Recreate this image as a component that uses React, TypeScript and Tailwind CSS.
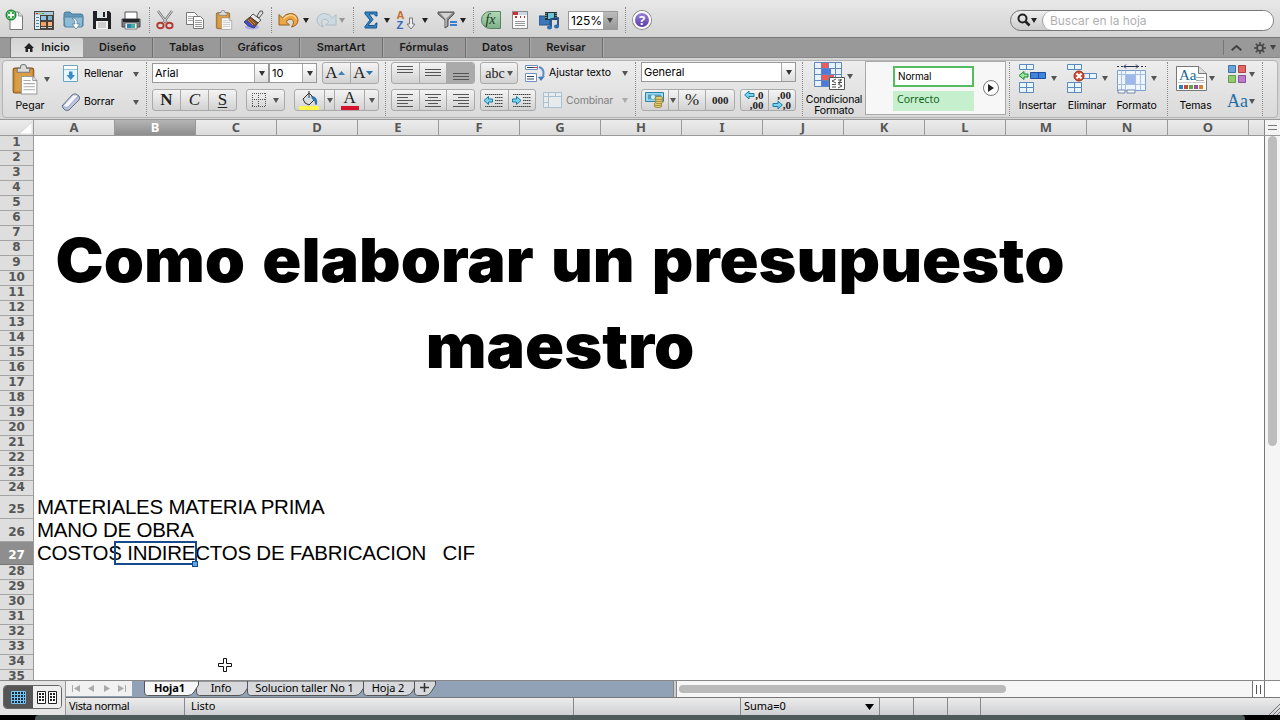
import type { ReactNode } from "react";

const ui = "font-['Inter','Liberation_Sans',sans-serif]";
const lucida = "font-['Noto_Sans','DejaVu_Sans',sans-serif]";
const serif = "font-['Liberation_Serif',serif]";

const columns = ["A", "B", "C", "D", "E", "F", "G", "H", "I", "J", "K", "L", "M", "N", "O"];
const rows = Array.from({ length: 35 }, (_, i) => i + 1);

const ribbonTabs = [
  { label: "Diseño", width: "w-[70px]" },
  { label: "Tablas", width: "w-[68px]" },
  { label: "Gráficos", width: "w-[79px]" },
  { label: "SmartArt", width: "w-[83px]" },
  { label: "Fórmulas", width: "w-[83px]" },
  { label: "Datos", width: "w-[64px]" },
  { label: "Revisar", width: "w-[73px]" },
];

const Caret = ({ className = "" }: { className?: string }) => (
  <svg viewBox="0 0 6 5" className={`h-[5px] w-[6px] shrink-0 ${className}`} fill="currentColor">
    <path d="M0 0h6L3 5z" />
  </svg>
);

const Slot = ({ className, children }: { className: string; children?: ReactNode }) => (
  <div className={`flex h-full shrink-0 items-center justify-center ${className}`}>{children}</div>
);

const Dots = ({ className }: { className: string }) => (
  <div className={`w-0 shrink-0 border-l border-dotted border-[#8a8a8a] ${className}`} />
);

/* ---------- Standard toolbar icons ---------- */

const NewIcon = () => (
  <svg width="20" height="22" viewBox="0 0 20 22">
    <path d="M5 3h8.500l4 4v13.500H5z" fill="#fafafa" stroke="#777" />
    <path d="M13.500 3v4h4" fill="#ddd" stroke="#888" strokeWidth=".8" />
    <circle cx="6" cy="6" r="4.800" fill="#fff" stroke="#1f8a35" strokeWidth="1.500" />
    <circle cx="6" cy="6" r="3.800" fill="#36a847" />
    <path d="M6 3v6M3 6h6" stroke="#fff" strokeWidth="1.800" />
  </svg>
);

const GalleryIcon = () => (
  <svg width="20" height="19" viewBox="0 0 20 19">
    <rect x=".5" y=".5" width="19" height="18" fill="#4a4038" stroke="#4b4b4b" />
    <path d="M1 1h18v3H1z" fill="#a9cbd6" />
    <path d="M2 2h2v1H2z" fill="#d22" />
    <path d="M5 2h2v1H5z" fill="#ea3" />
    <path d="M8 2h2v1H8z" fill="#4a4" />
    <path d="M1 4h5v14H1z" fill="#dcedf5" />
    <path d="M2 6.500h3M2 9.500h3M2 12.500h3M2 15.500h3" stroke="#58a" />
    <path d="M7 5h5v4H7z" fill="#8cc6e6" />
    <path d="M14 5h4v4h-4z" fill="#79b5d4" />
    <path d="M7 11h5v4H7z" fill="#f3a164" />
    <path d="M14 11h4v4h-4z" fill="#f6b07c" />
    <path d="M7 16.500h5M14 16.500h4" stroke="#cfd8da" />
  </svg>
);

const OpenIcon = () => (
  <svg width="21" height="19" viewBox="0 0 21 19">
    <path d="M1 3q0-2 2-2h4l2 2h9q2 0 2 2v10H1z" fill="#5f98bb" stroke="#4a7d9c" />
    <path d="M1 6h19l-1 10H2z" fill="#8fbdd6" stroke="#5287a7" />
    <path d="M9 7q6 0 5 6h3l-4 5-4-5h3q0-4-3-6z" fill="#fff" stroke="#55798e" strokeWidth=".7" />
  </svg>
);

const SaveIcon = () => (
  <svg width="18" height="18" viewBox="0 0 18 18">
    <path d="M0 0h16l2 2v16H0z" fill="#202124" />
    <path d="M4 0h10v7H4z" fill="#dce3e5" />
    <path d="M10 1h2v5h-2z" fill="#222" />
    <path d="M3 10h12v8H3z" fill="#f1f1f1" />
    <path d="M5 12h8M5 14h8M5 16h8" stroke="#aaa" />
  </svg>
);

const PrintIcon = () => (
  <svg width="20" height="19" viewBox="0 0 20 19">
    <path d="M4 1h12v8H4z" fill="#fff" stroke="#555" />
    <path d="M1 8h18v8H1z" fill="#7b7f84" stroke="#444" />
    <path d="M2 8h16v3H2z" fill="#232528" />
    <path d="M4 12h12v6H4z" fill="#eef3f7" stroke="#555" strokeWidth=".7" />
    <path d="M6 13h4v4H6z" fill="#2782b5" />
    <path d="M10 13h4v4h-4z" fill="#47b38f" />
  </svg>
);

const CutIcon = () => (
  <svg width="18" height="20" viewBox="0 0 18 20" fill="none">
    <path d="M2 1l9 12M16 1L7 13" stroke="#777" strokeWidth="2.4" />
    <path d="M2 1l9 12M16 1L7 13" stroke="#d9dddf" strokeWidth="1" />
    <ellipse cx="4.4" cy="15.5" rx="3.2" ry="2.8" stroke="#b23c33" strokeWidth="1.9" />
    <ellipse cx="13.4" cy="15.5" rx="3.2" ry="2.8" stroke="#b23c33" strokeWidth="1.9" />
  </svg>
);

const CopyIcon = () => (
  <svg width="20" height="19" viewBox="0 0 20 19" stroke="#777">
    <path d="M1.500 1.500h8l3 3v9h-11z" fill="#fafafa" />
    <path d="M3 5.500h7M3 7.500h7M3 9.500h7" stroke="#aaa" />
    <path d="M8.500 5.500h7l3 3v9h-10z" fill="#fff" />
    <path d="M10 9.500h7M10 11.500h7M10 13.500h7M10 15.500h7" stroke="#999" />
  </svg>
);

const ClipboardIcon = ({ className }: { className: string }) => (
  <svg className={className} viewBox="0 0 25 30">
    <rect x="1" y="4" width="20" height="24" rx="2" fill="#c98b35" stroke="#8d5919" />
    <path d="M3 6h16v20H3z" fill="#d99e47" />
    <path d="M5 4h3q0-3.500 3-3.500t3 3.500h3v4H5z" fill="#dcdcdc" stroke="#777" />
    <path d="M9 12h11l4 4v13H9z" fill="#fff" stroke="#999" />
    <path d="M20 12v4h4" fill="#ddd" stroke="#888" strokeWidth=".8" />
    <path d="M11 16h7M11 19h11M11 22h11M11 25h11" stroke="#aaa" />
  </svg>
);

const BrushIcon = () => (
  <svg width="21" height="20" viewBox="0 0 21 20">
    <ellipse cx="9" cy="17" rx="7" ry="2.500" fill="#a7adee" />
    <path d="M14 6l3-5q3-1 3 2l-4 5z" fill="#ddd" stroke="#555" />
    <path d="M10 4l8 6-3 3-8-6z" fill="#e8e8e8" stroke="#555" />
    <path d="M7 7l8 6-4 5q-6-1-10-6z" fill="#855229" stroke="#53351f" />
    <path d="M1 12q4 5 10 6l1-2Q6 14 4 10z" fill="#3e4ec9" />
    <path d="M5 10l5 5M7 9l5 5" stroke="#c98e55" />
  </svg>
);

const UndoIcon = () => (
  <svg width="21" height="17" viewBox="0 0 21 17">
    <path d="M1 2.500V13h10.500l-3.500-3.400Q11 6 13.800 7.300q3.400 2.700-.3 7.700Q20 13.500 20 8 19 1.500 12.500 1.500 7.500 1.500 4.500 6z" fill="#f1a741" stroke="#95601c" />
    <path d="M5.500 7q4.500-5 9.500-3.500 3 1.500 3.500 4" fill="none" stroke="#fbd79c" strokeWidth="1.200" />
  </svg>
);

const RedoIcon = () => (
  <svg width="21" height="17" viewBox="0 0 21 17" className="opacity-60">
    <path d="M20 2.500V13H9.500L13 9.600Q10 6 7.200 7.300 3.800 10 7.500 15 1 13.500 1 8 2 1.500 8.500 1.500q5 0 8 4.500z" fill="#c5d9e4" stroke="#8caabb" />
  </svg>
);

const SumIcon = () => (
  <svg width="14" height="18" viewBox="0 0 14 18">
    <path d="M1 1h12v4h-1.500q-.5-2-2-2H5l4 5.500-5 6h6q1.500 0 2-2.500H13l-.5 5H1v-1.500l5-6.500-5-6z" fill="#3486c5" stroke="#17558f" />
  </svg>
);

const SortIcon = () => (
  <div className="flex h-[20px] w-[21px] items-end font-['Liberation_Sans',sans-serif] text-[11px] font-bold">
    <div className="flex flex-col leading-[10px]">
      <span className="text-[#c66d2d]">A</span>
      <span className="text-[#3868b9]">Z</span>
    </div>
    <svg className="ml-[2px]" width="10" height="13" viewBox="0 0 10 13">
      <path d="M3.500 1h3v6H9l-4 5-4-5h2.500z" fill="#eee" stroke="#777" />
    </svg>
  </div>
);

const FilterIcon = () => (
  <svg width="21" height="18" viewBox="0 0 21 18">
    <path d="M1 1h16v2l-6 6v6l-3 2V9L1 3z" fill="#888" stroke="#555" />
    <path d="M3 2h12l-4 4-1.500 1v8l-1 .5V8z" fill="#d2d2d2" />
    <path d="M13 11h7M13 14h7" stroke="#397ed0" strokeWidth="1.800" />
  </svg>
);

const FormulaIcon = () => (
  <div className={`flex h-[18px] w-[20px] items-center justify-center rounded-l-full rounded-r-[2px] border border-[#568363] bg-gradient-to-b from-[#b2d8b4] to-[#7fb18a] text-[14px] leading-none text-[#173a22] italic ${serif}`}>
    fx
  </div>
);

const ToolboxIcon = () => (
  <svg width="16" height="18" viewBox="0 0 16 18">
    <rect x=".5" y=".5" width="15" height="17" fill="#fafafa" stroke="#8b8b8b" />
    <path d="M1 1h5v3H1z" fill="#c33" />
    <path d="M6 1h9v3H6z" fill="#c9dbe7" />
    <path d="M3 6h2M8 6h1M12 6h1" stroke="#a33" strokeWidth="2" />
    <path d="M3 10.500h10M3 12.500h10M3 14.500h10" stroke="#999" />
  </svg>
);

const MediaIcon = () => (
  <svg width="21" height="19" viewBox="0 0 21 19">
    <path d="M0 5h11v9H0z" fill="#3977b9" stroke="#285382" />
    <path d="M6 1h12v8H6z" fill="#233" />
    <path d="M9 2h6v6H9z" fill="#6bc6d8" />
    <path d="M7 2v6M17 2v6" stroke="#ddd" strokeDasharray="1 1" />
    <path d="M12 16V8l7-1v8" fill="none" stroke="#204f86" strokeWidth="1.800" />
    <ellipse cx="10.500" cy="16.500" rx="2.500" ry="1.900" fill="#2c6dae" />
    <ellipse cx="17.500" cy="15.500" rx="2.500" ry="1.900" fill="#2c6dae" />
  </svg>
);

const StandardToolbar = () => (
  <div className="flex h-[37px] items-center bg-gradient-to-b from-[#e8e8e8] to-[#d3d3d3] pt-[3px] text-[#222]">
    <Slot className="w-[29px]"><NewIcon /></Slot>
    <Slot className="w-[30px]"><GalleryIcon /></Slot>
    <Slot className="w-[28px]"><OpenIcon /></Slot>
    <Slot className="w-[30px]"><SaveIcon /></Slot>
    <Slot className="w-[28px]"><PrintIcon /></Slot>
    <Dots className="ml-[4px] h-[26px]" />
    <Slot className="w-[30px]"><CutIcon /></Slot>
    <Slot className="w-[29px]"><CopyIcon /></Slot>
    <Slot className="w-[30px]"><ClipboardIcon className="h-[20px] w-[18px]" /></Slot>
    <Slot className="w-[29px]"><BrushIcon /></Slot>
    <Dots className="ml-[3px] h-[26px]" />
    <Slot className="w-[32px]"><UndoIcon /></Slot>
    <Caret className="-ml-px" />
    <Slot className="w-[34px]"><RedoIcon /></Slot>
    <Caret className="-ml-[4px] text-[#999]" />
    <Dots className="ml-[8px] h-[26px]" />
    <Slot className="w-[34px]"><SumIcon /></Slot>
    <Caret className="-ml-[4px]" />
    <Slot className="w-[34px]"><SortIcon /></Slot>
    <Caret className="-ml-[2px]" />
    <Slot className="w-[38px]"><FilterIcon /></Slot>
    <Caret className="-ml-[6px]" />
    <Dots className="ml-[7px] h-[26px]" />
    <Slot className="w-[33px]"><FormulaIcon /></Slot>
    <Slot className="w-[26px]"><ToolboxIcon /></Slot>
    <Slot className="w-[32px]"><MediaIcon /></Slot>
    <div className={`ml-[3px] flex h-[19px] w-[50px] border border-[#999] bg-white text-[12px] leading-[18px] text-black ${ui}`}>
      <span className="flex-1 pl-[2px] tracking-[-0.1px]">125%</span>
      <span className="flex w-[14px] items-center justify-center bg-gradient-to-b from-[#bbb] to-[#999] text-[#444]"><Caret /></span>
    </div>
    <Dots className="ml-[7px] h-[26px]" />
    <Slot className="w-[32px]">
      <div className="flex h-[18px] w-[18px] items-center justify-center rounded-full border-2 border-white bg-gradient-to-b from-[#9a80d6] to-[#5b3da8] text-[13px] leading-none font-bold text-white shadow-[0_0_0_1px_#888]">?</div>
    </Slot>
    <div className="mr-[6px] ml-auto flex h-[21px] w-[264px] overflow-hidden rounded-full border border-[#777] bg-gradient-to-b from-[#eee] to-[#ccc]">
      <div className="flex w-[31px] items-center pl-[6px]">
        <svg width="14" height="14" viewBox="0 0 14 14" fill="none" stroke="#222">
          <circle cx="5.500" cy="5.500" r="4" strokeWidth="2" />
          <path d="M8.500 8.500l4 4" strokeWidth="2.600" />
        </svg>
        <Caret />
      </div>
      <div className={`flex-1 rounded-l-full border-l border-[#999] bg-white pl-[7px] text-[12px] leading-[20px] tracking-[-0.05px] text-[#b0b0b0] ${ui}`}>Buscar en la hoja</div>
    </div>
  </div>
);

const RibbonTabs = () => (
  <div className={`flex h-[20px] border-t border-[#777] bg-[#999] text-[11px] leading-[18px] font-semibold text-[#1b1b1b] ${ui}`}>
    <div className="w-[11px] border-r border-[#777]" />
    <div className="flex w-[72px] items-center justify-center gap-[7px] rounded-t-[2px] bg-gradient-to-b from-[#d4d4d4] to-[#e0e0e0] pb-px">
      <svg width="10" height="9" viewBox="0 0 10 9"><path d="M5 0l5 5H8.500v4h-2.500V6H4v3H1.500V5H0z" fill="#222" /></svg>
      Inicio
    </div>
    {ribbonTabs.map((tab) => (
      <div key={tab.label} className={`border-r border-[#6e6e6e] text-center shadow-[1px_0_0_#aaa] ${tab.width}`}>{tab.label}</div>
    ))}
    <div className="my-[2px] mr-[7px] ml-auto border-l border-[#777]" />
    <div className="flex items-center text-[#444]">
      <svg width="11" height="6" viewBox="0 0 11 6" fill="none" stroke="currentColor" strokeWidth="2"><path d="M.7 5.300L5.500 1l4.800 4.300" /></svg>
      <svg className="ml-[12px]" width="12" height="12" viewBox="0 0 12 12" fill="none" stroke="currentColor">
        <circle cx="6" cy="6" r="3" strokeWidth="1.700" />
        <path d="M6 0v3M6 9v3M0 6h3M9 6h3M1.800 1.800l2 2M8.200 8.200l2 2M1.800 10.200l2-2M8.200 3.800l2-2" strokeWidth="1.500" />
      </svg>
      <Caret className="mr-[4px] ml-[4px]" />
    </div>
  </div>
);

/* ---------- Ribbon pieces ---------- */

const ButtonGroup = ({ className, children }: { className: string; children: ReactNode }) => (
  <div className={`flex h-[22px] shrink-0 divide-x divide-[#aaa] overflow-hidden rounded-[3px] border border-[#aaa] bg-gradient-to-b from-[#f4f4f4] to-[#d2d2d2] ${className}`}>{children}</div>
);

const Btn = ({ className = "flex-1", children }: { className?: string; children: ReactNode }) => (
  <div className={`flex items-center justify-center text-[#222] ${className}`}>{children}</div>
);

const Combo = ({ className, children }: { className: string; children: ReactNode }) => (
  <div className={`flex h-[20px] shrink-0 border border-[#999] bg-white text-[11px] leading-[18px] text-black ${ui} ${className}`}>
    <span className="flex-1 pl-[2px]">{children}</span>
    <span className="flex w-[14px] items-center justify-center border-l border-[#aaa] bg-gradient-to-b from-white to-[#ddd] text-[#333]"><Caret /></span>
  </div>
);

const Lines = ({ d }: { d: string }) => (
  <svg width="18" height="16" viewBox="0 0 18 16"><path d={d} stroke="#555" strokeWidth="1" /></svg>
);

const IndentIcon = ({ flip }: { flip?: boolean }) => (
  <svg width="22" height="15" viewBox="0 0 22 15">
    <path d="M2 1.500h18M12 4.500h8M12 7.500h8M12 10.500h8M2 13.500h18" stroke="#444" strokeDasharray="1.500 .5" />
    <path d={flip ? "M10 7.500L5.500 3.500v2.500H1.500v3h4v2.500z" : "M1 7.500l4.500-4v2.500h4v3h-4v2.500z"} fill="#77d4f0" stroke="#1c7aa5" />
  </svg>
);

const ClipboardGroup = () => (
  <div className={`flex w-[143px] text-[10.5px] text-black ${ui}`}>
    <div className="w-[54px] shrink-0 pt-[3px]">
      <div className="flex items-center pl-[9px]">
        <ClipboardIcon className="h-[31px] w-[26px]" />
        <Caret className="ml-[6px] text-[#555]" />
      </div>
      <div className="mt-[4px] text-center leading-[14px]">Pegar</div>
    </div>
    <div className="flex-1">
      <div className="flex h-[26px] items-center pl-[5px]">
        <svg width="18" height="18" viewBox="0 0 18 18">
          <path d="M1.500.5h14v16h-14z" fill="#e9f6fb" stroke="#6ca5bf" />
          <path d="M2 1h13v3H2z" fill="#fff" /><path d="M2 4.500h13" stroke="#8fc0d5" />
          <path d="M7 6.500h3.500V10H13l-4.200 5L4.500 10H7z" fill="#368ccd" />
        </svg>
        <span className="ml-[4px] w-[49px] tracking-[-0.15px]">Rellenar</span><Caret className="text-[#555]" />
      </div>
      <div className="mt-[2px] flex h-[26px] items-center pl-[4px]">
        <svg width="20" height="19" viewBox="0 0 20 19">
          <path d="M1 13L11 2q2-1.500 4-1l3 2q1 2 0 4L8 17q-2 1-4 0l-2-2z" fill="#bac4df" stroke="#677087" />
          <path d="M2 13L12 2q3-1 5 1L7 14q-2 1-5-1z" fill="#f3f5fb" stroke="#8f98ad" strokeWidth=".7" />
        </svg>
        <span className="ml-[3px] w-[49px] tracking-[-0.15px]">Borrar</span><Caret className="text-[#555]" />
      </div>
    </div>
  </div>
);

const FontGroup = () => (
  <div className="flex w-[238px] flex-col gap-[5px] pt-px pl-[5px]">
    <div className="flex h-[22px] items-center">
      <Combo className="w-[117px]">Arial</Combo>
      <Combo className="w-[48px]">10</Combo>
      <ButtonGroup className={`ml-[5px] w-[57px] text-[17px] ${serif}`}>
        <Btn><span className="-ml-[3px]">A</span><svg width="7" height="4"><path d="M0 4l3.500-4L7 4z" fill="#3c83b4" /></svg></Btn>
        <Btn><span className="-ml-[3px]">A</span><svg width="7" height="4"><path d="M0 0h7L3.500 4z" fill="#2a71a8" /></svg></Btn>
      </ButtonGroup>
    </div>
    <div className="flex">
      <ButtonGroup className={`w-[85px] text-[17px] ${serif}`}>
        <Btn><span className="font-semibold">N</span></Btn>
        <Btn><i>C</i></Btn>
        <Btn><span className="underline underline-offset-2">S</span></Btn>
      </ButtonGroup>
      <ButtonGroup className="ml-[9px] w-[39px]">
        <Btn>
          <svg width="14" height="14" viewBox="0 0 14 14" fill="none" stroke="#555" strokeDasharray="1 1"><path d="M.5 0v14M6.500 0v14M13.500 0v14M0 .5h14M0 6.500h14M0 13.500h14" /></svg>
          <Caret className="ml-[7px] text-[#555]" />
        </Btn>
      </ButtonGroup>
      <ButtonGroup className="ml-[9px] w-[85px]">
        <Btn className="w-[31px]">
          <svg width="21" height="19" viewBox="0 0 21 19">
            <path d="M0 15h20v4H0z" fill="#fcf54a" />
            <path d="M4 8l6-6 6 6-6 6q-5-1-6-6z" fill="#d7dde0" stroke="#333" />
            <path d="M10 7V0" stroke="#333" />
            <path d="M12 5q7 0 6 8-1 2-2 0 0-4-3-5z" fill="#2c75ad" />
          </svg>
        </Btn>
        <Btn className="w-[10px]"><Caret className="text-[#555]" /></Btn>
        <Btn className={`w-[31px] flex-col text-[17px] leading-[14px] ${serif}`}>A<span className="mt-px h-[4px] w-[18px] bg-[#d5102a]" /></Btn>
        <Btn className="w-[13px]"><Caret className="text-[#555]" /></Btn>
      </ButtonGroup>
    </div>
  </div>
);

const AlignGroup = () => (
  <div className={`flex w-[249px] flex-col gap-[5px] pt-px pl-[5px] text-[10.5px] ${ui}`}>
    <div className="flex h-[22px] items-center">
      <ButtonGroup className="w-[84px]">
        <Btn><Lines d="M1 1.500h16M1 4.500h16M1 7.500h16" /></Btn>
        <Btn><Lines d="M1 4.500h16M1 7.500h16M1 10.500h16" /></Btn>
        <Btn className="flex-1 bg-[#aaa]"><Lines d="M1 8.500h16M1 11.500h16M1 14.500h16" /></Btn>
      </ButtonGroup>
      <ButtonGroup className={`ml-[5px] w-[38px] text-[14px] ${serif}`}><Btn>abc<Caret className="ml-[2px] text-[#555]" /></Btn></ButtonGroup>
      <svg className="ml-[7px]" width="21" height="19" viewBox="0 0 21 19" fill="none">
        <path d="M.5 1.500h12v4H.5zM.5 9.500h11v8H.5z" fill="#fff" stroke="#6d91c0" />
        <path d="M2 3.500h7M2 12.500h7M2 15h7" stroke="#345" />
        <path d="M9 3.500h3" stroke="#d33" />
        <path d="M14 3q6 2 4 9" stroke="#5f8cc7" strokeWidth="2" /><path d="M13 13l7-1-4 5z" fill="#4479bd" />
      </svg>
      <span className="ml-[3px] w-[73px] tracking-[-0.05px] text-black">Ajustar texto</span>
      <Caret className="text-[#555]" />
    </div>
    <div className="flex items-center">
      <ButtonGroup className="w-[84px]">
        <Btn><Lines d="M1 2.500h16M1 5.500h11M1 8.500h16M1 11.500h11M1 14.500h16" /></Btn>
        <Btn><Lines d="M1 2.500h16M4 5.500h10M1 8.500h16M4 11.500h10M1 14.500h16" /></Btn>
        <Btn><Lines d="M1 2.500h16M6 5.500h11M1 8.500h16M6 11.500h11M1 14.500h16" /></Btn>
      </ButtonGroup>
      <ButtonGroup className="ml-[5px] w-[56px]"><Btn><IndentIcon /></Btn><Btn><IndentIcon flip /></Btn></ButtonGroup>
      <svg className="ml-[7px]" width="19" height="16" viewBox="0 0 19 16"><path d="M.5.5h18v15H.5zM5.500.5v15M.5 4.500h18M12.500.5v4M.5 10.500h5" fill="#e7ebee" stroke="#abc0ce" /></svg>
      <span className="mt-px ml-[4px] w-[56px] tracking-[-0.15px] text-[#808080]">Combinar</span>
      <Caret className="text-[#aaa]" />
    </div>
  </div>
);

const NumberGroup = () => (
  <div className="flex w-[166px] flex-col gap-[5px] pt-px pl-[5px]">
    <div className="flex h-[22px] items-start"><Combo className="w-[155px]">General</Combo></div>
    <div className="flex">
      <ButtonGroup className="w-[94px]">
        <Btn className="w-[27px]">
          <svg width="19" height="16" viewBox="0 0 19 16">
            <path d="M.5.5h18v9H.5z" fill="#9edaf0" stroke="#2f80a6" />
            <path d="M3 2.500h13v5H3z" fill="#579fc1" /><circle cx="8" cy="5" r="2" fill="#dff4f9" />
            <g fill="#e2cd75" stroke="#8c762d" strokeWidth=".7"><ellipse cx="13" cy="14" rx="4" ry="1.600" /><ellipse cx="13" cy="12" rx="4" ry="1.600" /><ellipse cx="14" cy="10" rx="4" ry="1.600" /><ellipse cx="14" cy="8" rx="4" ry="1.600" /><ellipse cx="14" cy="6" rx="4" ry="1.600" /></g>
          </svg>
        </Btn>
        <Btn className="w-[10px]"><Caret className="text-[#555]" /></Btn>
        <Btn className={`w-[28px] text-[17px] ${serif}`}>%</Btn>
        <Btn className={`w-[28px] text-[11px] font-bold ${serif}`}>000</Btn>
      </ButtonGroup>
      <ButtonGroup className={`ml-[5px] w-[56px] text-[11px] leading-[10px] font-bold ${serif}`}>
        <Btn className="flex-1 flex-col">
          <span className="flex items-center self-end pr-[4px]"><svg width="11" height="10"><path d="M.7 5L5 1v2.500h5v3H5V9z" fill="#77d4f0" stroke="#1c7aa5" /></svg>,0</span>
          <span className="self-end pr-[4px]">,00</span>
        </Btn>
        <Btn className="flex-1 flex-col">
          <span className="self-end pr-[4px]">,00</span>
          <span className="flex items-center self-end pr-[4px]"><svg width="11" height="10"><path d="M10.300 5L6 1v2.500H1v3h5V9z" fill="#77d4f0" stroke="#1c7aa5" /></svg>,0</span>
        </Btn>
      </ButtonGroup>
    </div>
  </div>
);

const StylesGroup = () => (
  <div className={`flex w-[206px] text-[10.5px] text-black ${ui}`}>
    <div className="w-[62px] pt-[1px] text-center">
      <div className="flex items-center pl-[11px]">
        <svg width="31" height="29" viewBox="0 0 31 29">
          <path d="M.5.5h27v24H.5z" fill="#e8f2ff" />
          <path d="M8 1h6v6H8z" fill="#ee5a5a" /><path d="M8 7h9v6H8z" fill="#4d78dc" />
          <path d="M8 13h12v6H8z" fill="#ee5a5a" /><path d="M8 19h6v6H8z" fill="#4d78dc" />
          <path d="M.5.5h27v24H.5zM7.500.5v24M14.500.5v24M21.500.5v24M.5 6.500h27M.5 12.500h27M.5 18.500h27" fill="none" stroke="#6287bd" />
          <path d="M15.500 15.500h15v12h-15z" fill="#fff" stroke="#555" />
          <path d="M22 17l-4 2 4 2M18 22.500h4M24 18h4M24 20.500h4M27 17l-2 5M18 25h4M24 22l4 2-4 2" stroke="#222" fill="none" strokeWidth=".8" />
        </svg>
        <Caret className="ml-[2px] text-[#555]" />
      </div>
      <div className="mt-[3px] leading-[11px] tracking-[-0.2px] whitespace-nowrap">Condicional<br />Formato</div>
    </div>
    <div className="flex h-[54px] w-[141px] items-center border border-[#aaa] bg-[#f7f7f7] pl-[27px]">
      <div className="flex w-[81px] flex-col gap-[4px]">
        <div className="h-[21px] border-2 border-[#55bd60] bg-white pl-[3px] text-[10px] leading-[16px] tracking-[-0.15px]">Normal</div>
        <div className={`h-[20px] bg-[#c5efcd] pl-[4px] text-[10.5px] leading-[17px] text-[#126419] ${lucida}`}>Correcto</div>
      </div>
      <div className="ml-[9px] flex h-[16px] w-[16px] items-center justify-center rounded-full border border-[#777] bg-white">
        <svg width="6" height="8"><path d="M0 0l6 4-6 4z" fill="#222" /></svg>
      </div>
    </div>
  </div>
);

const CellTool = ({ label, className, children }: { label: string; className: string; children: ReactNode }) => (
  <div className={`pt-[2px] text-center ${className}`}>
    <div className="flex h-[31px] items-center">{children}<Caret className="ml-auto text-[#555]" /></div>
    <div className="mt-[5px] leading-[14px] tracking-[-0.1px]">{label}</div>
  </div>
);

const SmallCells = ({ x, y }: { x: number; y: number }) => (
  <g transform={`translate(${x} ${y})`}><path d="M.5.5h14v5H.5zM7.500.5v5" fill="#e8f5ff" stroke="#5b89be" /></g>
);

const CellsGroup = () => (
  <div className={`flex w-[157px] pl-[8px] text-[10.5px] text-black ${ui}`}>
    <CellTool label="Insertar" className="w-[39px]">
      <svg width="28" height="30" viewBox="0 0 28 30">
        <SmallCells x={1} y={0} /><SmallCells x={1} y={18} /><SmallCells x={1} y={23} />
        <path d="M12.500 8.500h15v6h-15zM20.500 8.500v6" fill="#4385dc" stroke="#234f9f" />
        <path d="M1 11.500l5-4v2.500h4v3H6v2.500z" fill="#9de6a0" stroke="#208737" />
      </svg>
    </CellTool>
    <CellTool label="Eliminar" className="ml-[9px] w-[42px]">
      <svg width="31" height="30" viewBox="0 0 31 30">
        <SmallCells x={1} y={0} /><SmallCells x={16} y={9} /><SmallCells x={1} y={18} /><SmallCells x={1} y={23} />
        <circle cx="13" cy="12" r="5" fill="#d54c32" stroke="#913020" /><path d="M10.500 9.500l5 5M15.500 9.500l-5 5" stroke="#fff" strokeWidth="2" />
      </svg>
    </CellTool>
    <CellTool label="Formato" className="ml-[8px] w-[41px]">
      <svg width="31" height="30" viewBox="0 0 31 30">
        <path d="M1 2.500h29" stroke="#334" strokeDasharray="2 2" /><path d="M8 2.500h14M10 .5l-2 2 2 2M20 .5l2 2-2 2" stroke="#235" fill="none" />
        <path d="M1.500 6.500h28v20h-28z" fill="#eef5fd" stroke="#7a9dcb" />
        <path d="M10 11h9v10h-9z" fill="#9db9ec" />
        <path d="M9.500 6.500v20M19.500 6.500v20M1.500 10.500h28M1.500 20.500h28M24.500 6.500v20M5.500 6.500v20" stroke="#a6bfe2" />
        <path d="M2 26h7v3H2zM11 26h8v3h-8z" fill="#fff" stroke="#6c87ae" />
      </svg>
    </CellTool>
  </div>
);

const ThemesGroup = () => (
  <div className={`flex w-[94px] pl-[8px] text-[10.5px] text-black ${ui}`}>
    <CellTool label="Temas" className="w-[39px]">
      <div className="relative h-[27px] w-[31px]">
        <svg width="31" height="27" viewBox="0 0 31 27">
          <path d="M.5 1.500h22l8 7v17H.5z" fill="#fff" stroke="#777" /><path d="M22.500 1.500v7h8" fill="#ddd" stroke="#777" />
          <path d="M20 12.500h8M20 15.500h8" stroke="#aaa" /><path d="M2 17.500h27" stroke="#ccc" />
          <path d="M3 20h4v4H3z" fill="#297fc1" /><path d="M8 20h4v4H8z" fill="#c44c37" /><path d="M13 20h4v4h-4z" fill="#61a13e" /><path d="M18 20h4v4h-4z" fill="#9550a0" /><path d="M23 20h4v4h-4z" fill="#d98331" />
        </svg>
        <span className={`absolute top-[2px] left-[3px] text-[15px] leading-[16px] text-[#176899] ${serif}`}>Aa</span>
      </div>
    </CellTool>
    <div className="ml-[12px] pt-[4px]">
      <div className="flex items-center">
        <svg width="20" height="19" viewBox="0 0 20 19">
          <path d="M1.500.5h7v7h-7z" fill="#6ba3da" stroke="#3f71a5" /><path d="M11.500.5h7v7h-7z" fill="#e36766" stroke="#aa4242" />
          <path d="M1.500 10.500h7v7h-7z" fill="#93cb73" stroke="#669b47" /><path d="M11.500 10.500h7v7h-7z" fill="#bc7cc9" stroke="#895195" />
        </svg>
        <Caret className="ml-[2px] text-[#555]" />
      </div>
      <div className={`mt-[7px] flex items-center text-[18px] leading-[20px] text-[#1e70a5] ${serif}`}>Aa<Caret className="ml-px text-[#555]" /></div>
    </div>
  </div>
);

const Ribbon = () => (
  <div className="h-[62px] border-t border-[#888] bg-[#d5d5d5] px-[2px] pt-[2px] pb-[2px]">
    <div className="flex h-[58px] rounded-[4px] border border-[#b4b4b4] bg-gradient-to-b from-[#ededed] to-[#dadada]">
      <ClipboardGroup />
      <Dots className="my-[1px]" />
      <FontGroup />
      <Dots className="my-[1px]" />
      <AlignGroup />
      <Dots className="my-[1px]" />
      <NumberGroup />
      <Dots className="my-[1px]" />
      <StylesGroup />
      <Dots className="my-[1px]" />
      <CellsGroup />
      <Dots className="my-[1px]" />
      <ThemesGroup />
      <Dots className="my-[1px]" />
    </div>
  </div>
);

/* ---------- Sheet ---------- */

const ColumnHeaders = () => (
  <div className={`flex h-[17px] border-y border-[#999] bg-gradient-to-b from-[#ececec] to-[#dcdcdc] text-[13px] leading-[14px] font-bold text-[#575757] ${lucida}`}>
    <div className="flex w-[34px] items-end justify-end border-r border-[#999] pr-[1px] pb-[1px]">
      <svg width="13" height="12"><path d="M13 0v12H0z" fill="#fff" stroke="#bbb" strokeWidth=".5" /></svg>
    </div>
    {columns.map((col) => (
      <div key={col} className={`w-[81px] shrink-0 border-r border-[#999] text-center ${col === "B" ? "bg-gradient-to-b from-[#b5b5b5] to-[#8d8d8d] text-white" : ""}`}>{col}</div>
    ))}
    <div className="w-[16px] border-r border-[#888]" />
    <div className="flex flex-1 flex-col items-center justify-center gap-[3px] bg-[#f4f4f4]">
      <span className="h-px w-[9px] bg-[#777]" /><span className="h-px w-[9px] bg-[#777]" />
    </div>
  </div>
);

const Sheet = () => (
  <div className="flex h-[544px] overflow-hidden bg-white">
    <div className="w-[34px] shrink-0 border-r border-[#999] bg-[#dedede] text-center font-['DejaVu_Sans',sans-serif] text-[12px] font-bold text-[#575757]">
      {rows.map((row) => (
        <div
          key={row}
          className={`border-b ${row >= 25 && row <= 27 ? "h-[23px] leading-[27px]" : "h-[15px] leading-[13px]"} ${
            row === 27 ? "border-[#777] bg-[#8e8e8e] text-white" : "border-[#a5a5a5]"
          }`}
        >
          {row}
        </div>
      ))}
    </div>
    <div className="relative flex-1 overflow-hidden border-r border-[#777] text-black">
      <h1 className="ml-[1px] h-[359px] w-[1050px] scale-x-[1.058] pt-[81px] text-center font-['Inter',sans-serif] text-[61px] leading-[86px] font-black [word-spacing:4px]">
        Como elaborar un presupuesto
        <br />
        maestro
      </h1>
      <div className="pl-[3px] font-['Liberation_Sans',sans-serif] text-[20.5px] leading-[23px] tracking-[-0.24px] whitespace-pre">
        <div>MATERIALES MATERIA PRIMA</div>
        <div>MANO DE OBRA</div>
        <div>COSTOS INDIRECTOS DE FABRICACION   CIF</div>
      </div>
      {/* active cell */}
      <div className="absolute top-[405px] left-[80px] h-[24px] w-[83px] border-2 border-[#174a8c]">
        <span className="absolute -right-[3px] -bottom-[4px] h-[6px] w-[6px] border border-[#174a8c] bg-[#5da7e8]" />
      </div>
      <svg className="absolute top-[522px] left-[184px]" width="14" height="14" viewBox="0 0 14 14">
        <path d="M5.500.5h3v5h5v3h-5v5h-3v-5h-5v-3h5z" fill="#fff" stroke="#111" />
      </svg>
    </div>
    <div className="flex w-[15px] justify-center bg-[#f5f5f5]">
      <div className="h-[310px] w-[9px] rounded-full bg-[#bdbdbd]" />
    </div>
  </div>
);

const SheetTab = ({ width, active, className, children }: { width: number; active?: boolean; className: string; children: ReactNode }) => (
  <div className={`relative h-[15px] shrink-0 ${className}`}>
    <svg className="absolute inset-0" width={width} height="15" viewBox={`0 0 ${width} 15`}>
      <path d={`M.5 0V11q0 3.500 3 3.500H${width - 11}q4 0 6-3.500L${width - 0.5} 4V0z`} fill={active ? "#f7f7f7" : "#d6d8db"} stroke="#555" />
    </svg>
    <span className="relative block pr-[1px] text-center leading-[13px] tracking-[-0.1px]">{children}</span>
  </div>
);

const NavArrow = ({ d }: { d: string }) => (
  <svg width="9" height="7" viewBox="0 0 9 7"><path d={d} fill="#aaa" /></svg>
);

const Grid = () => (
  <svg width="15" height="13" viewBox="0 0 15 13"><path d="M.5.5h14v12H.5zM3.500.5v12M6.500.5v12M9.500.5v12M12.500.5v12M.5 3.500h14M.5 6.500h14M.5 9.500h14" fill="#192f40" stroke="#79c1ee" /></svg>
);

const Page = () => (
  <svg width="9" height="13" viewBox="0 0 9 13"><path d="M.5.5h8v12h-8z" fill="#fff" stroke="#222" /><path d="M2 3h2M5 3h2M2 6h2M5 6h2M2 9h2M5 9h2" stroke="#222" strokeWidth="2" /></svg>
);

const BottomBar = () => (
  <div className={`flex h-[35px] border-t border-[#888] bg-[#dcdcdc] text-[11px] text-black ${lucida}`}>
    <div className="w-[66px] shrink-0 border-r border-[#999] bg-[#e4e4e4] pt-[4px] pl-[3px]">
      <div className="flex h-[24px] w-[59px] overflow-hidden rounded-[4px] border border-[#666]">
        <div className="flex w-[29px] items-center justify-center bg-[#555]"><Grid /></div>
        <div className="flex flex-1 items-center justify-center gap-[2px] bg-[#eee]"><Page /><Page /></div>
      </div>
    </div>
    <div className="flex flex-1 flex-col">
      <div className="flex h-[16px] bg-[#91a2b6]">
        <div className="flex h-[15px] w-[66px] items-center justify-between bg-[#f1f1f1] px-[6px]">
          <NavArrow d="M0 0h1v7H0zM8 0v7L2 3.500z" />
          <NavArrow d="M7 0v7L1 3.500z" />
          <NavArrow d="M2 0v7l6-3.500z" />
          <NavArrow d="M1 0v7l6-3.500zM8 0h1v7H8z" />
        </div>
        <div className="w-[12px]" />
        <SheetTab width={55} active className="z-10 w-[52px] font-bold">Hoja1</SheetTab>
        <SheetTab width={54} className="w-[51px]">Info</SheetTab>
        <SheetTab width={119} className="w-[116px]">Solucion taller No 1</SheetTab>
        <SheetTab width={54} className="w-[51px]">Hoja 2</SheetTab>
        <SheetTab width={22} className="w-[22px]">
          <svg className="mx-auto mt-[2px]" width="9" height="9"><path d="M4.500 0v9M0 4.500h9" stroke="#333" strokeWidth="1.500" /></svg>
        </SheetTab>
        <div className="ml-auto w-[4px] border-x border-[#888] bg-[#ccc]" />
        <div className="flex w-[575px] items-center bg-[#f6f6f6] pl-[2px]"><div className="h-[8px] w-[327px] rounded-full bg-[#bababa]" /></div>
        <div className="flex w-[13px] items-center justify-center gap-[3px] border-x border-[#777] bg-white"><span className="h-[9px] w-px bg-[#555]" /><span className="h-[9px] w-px bg-[#555]" /></div>
        <div className="w-[15px] bg-white" />
      </div>
      <div className="flex h-[18px] divide-x divide-[#888] border-t border-[#777] bg-gradient-to-b from-[#ececec] to-[#cfd0d3] text-[11px] leading-[16px]">
        <div className="w-[119px] pl-[3px] tracking-[-0.4px]">Vista normal</div>
        <div className="w-[389px] pl-[6px]">Listo</div>
        <div className="w-[167px]" />
        <div className="flex w-[139px] justify-between pr-[5px] pl-[3px]">Suma=0<svg className="mt-[6px]" width="9" height="6"><path d="M0 0h9L4.500 6z" /></svg></div>
        <div className="w-[34px]" />
        <div className="w-[34px]" />
        <div className="w-[33px]" />
        <div className="flex flex-1 items-end justify-end"><svg width="12" height="12" stroke="#777"><path d="M1 12L12 1M5 12l7-7M9 12l3-3" /></svg></div>
      </div>
    </div>
  </div>
);

const App = () => {
  return (
    <div className="h-[720px] w-[1280px] overflow-hidden bg-black">
      <StandardToolbar />
      <RibbonTabs />
      <Ribbon />
      <ColumnHeaders />
      <Sheet />
      <BottomBar />
      <div className="mr-[35px] ml-[35px] h-[5px] rounded-t-[4px] bg-[#4d5a59]" />
    </div>
  );
};

export default App;
